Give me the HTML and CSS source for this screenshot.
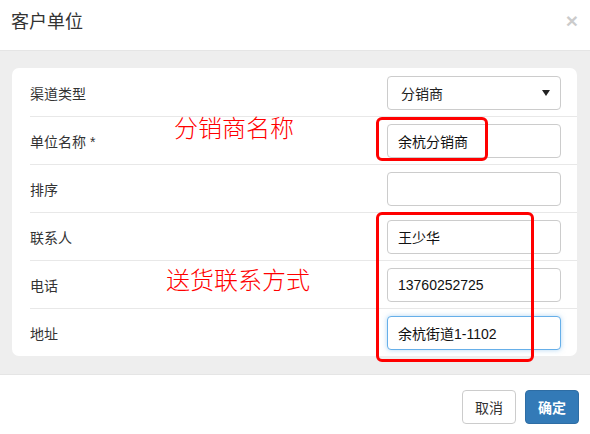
FILE: index.html
```html
<!DOCTYPE html>
<html lang="zh">
<head>
<meta charset="utf-8">
<link rel="stylesheet" href="styles.css">
</head>
<body>
<div class="modal">
  <div class="modal-header">
    <h4 class="modal-title">客户单位</h4>
    <span class="close">×</span>
  </div>
  <div class="modal-body">
    <div class="card">
      <div class="row first">
        <label class="label">渠道类型</label>
        <div class="control select">
          <span>分销商</span>
          <svg class="caret" width="8" height="6" viewBox="0 0 8 6"><path d="M0 0 L8 0 L4 6 Z" fill="#222"/></svg>
        </div>
      </div>
      <div class="row">
        <label class="label">单位名称 *</label>
        <div class="control">余杭分销商</div>
      </div>
      <div class="row">
        <label class="label">排序</label>
        <div class="control"></div>
      </div>
      <div class="row">
        <label class="label">联系人</label>
        <div class="control">王少华</div>
      </div>
      <div class="row">
        <label class="label">电话</label>
        <div class="control">13760252725</div>
      </div>
      <div class="row">
        <label class="label">地址</label>
        <div class="control focus">余杭街道1-1102</div>
      </div>
    </div>
    <div class="note note-name">分销商名称</div>
    <div class="note note-contact">送货联系方式</div>
    <div class="mark mark-name"></div>
    <div class="mark mark-contact"></div>
  </div>
  <div class="modal-footer">
    <button class="btn btn-default">取消</button>
    <button class="btn btn-primary">确定</button>
  </div>
</div>
</body>
</html>
```

FILE: styles.css
```css
html, body {
  margin: 0;
  padding: 0;
  background: #fff;
}
body {
  font-family: "Liberation Sans", "Noto Sans CJK SC", sans-serif;
  font-size: 14px;
  color: #333;
  width: 590px;
  height: 434px;
  overflow: hidden;
}
.modal {
  position: relative;
}
.modal-header {
  height: 50px;
  border-bottom: 1px solid #e5e5e5;
  display: flex;
  align-items: center;
  justify-content: space-between;
  padding: 0 12px 0 11px;
}
.modal-title {
  margin: 0;
  font-size: 18px;
  font-weight: normal;
  color: #333;
  line-height: 1;
  margin-top: -6px;
}
.close {
  font-size: 21px;
  font-weight: bold;
  color: #000;
  opacity: 0.2;
  line-height: 1;
  margin-top: -10px;
}
.modal-body {
  position: relative;
  background: #eeeeee;
  padding: 17px 13px 18px 12px;
}
.card {
  background: #fff;
  border-radius: 7px;
  padding-left: 18px;
}
.row {
  display: flex;
  align-items: center;
  justify-content: space-between;
  border-top: 1px solid #e8e8e8;
  padding: 7px 16px 6px 0;
}
.row.first {
  border-top: none;
  padding-top: 8px;
}
.label {
  color: #333;
  font-size: 14px;
}
.control {
  box-sizing: border-box;
  width: 174px;
  height: 34px;
  border: 1px solid #ccc;
  border-radius: 4px;
  padding: 0 10px;
  display: flex;
  align-items: center;
  font-size: 14px;
  color: #111;
  background: #fff;
}
.select {
  justify-content: space-between;
  padding: 0 10px 0 13px;
  color: #222;
}
.caret {
  display: block;
}
.focus {
  border-color: #66afe9;
  box-shadow: 0 0 5px rgba(102, 175, 233, 0.5);
}
.note {
  position: absolute;
  color: #ff0000;
  font-size: 24px;
  line-height: 1;
  font-family: "Noto Sans CJK SC", sans-serif;
  font-weight: 300;
}
.note-name {
  left: 174px;
  top: 64px;
}
.note-contact {
  left: 166px;
  top: 216px;
}
.mark {
  position: absolute;
  border: 3px solid #ff0000;
  border-radius: 6px;
  box-sizing: border-box;
}
.mark-name {
  left: 376px;
  top: 66px;
  width: 112px;
  height: 44px;
}
.mark-contact {
  left: 376px;
  top: 161px;
  width: 158px;
  height: 150px;
}
.modal-footer {
  border-top: 1px solid #e5e5e5;
  display: flex;
  justify-content: flex-end;
  gap: 9px;
  padding: 15px 11px 0 0;
}
.btn {
  box-sizing: border-box;
  height: 34px;
  width: 54px;
  border-radius: 4px;
  font-family: "Liberation Sans", "Noto Sans CJK SC", sans-serif;
  font-size: 14px;
  padding: 0;
  cursor: pointer;
}
.btn-default {
  background: #fff;
  border: 1px solid #ccc;
  color: #333;
}
.btn-primary {
  background: #337ab7;
  border: 1px solid #2e6da4;
  color: #fff;
  font-weight: bold;
}
```
